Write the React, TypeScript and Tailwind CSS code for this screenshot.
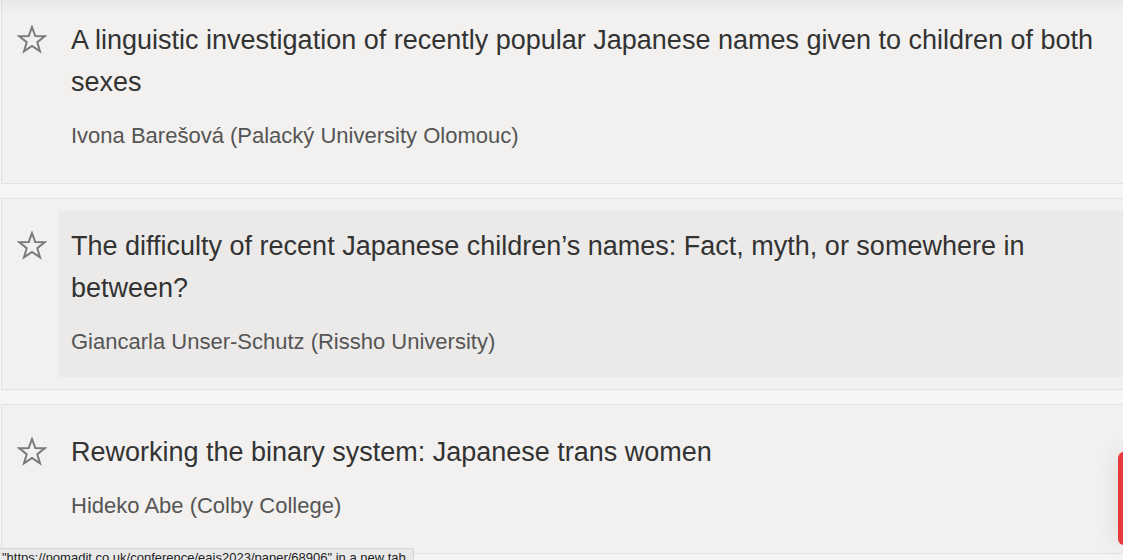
import React from 'react'

interface Paper {
  title: string
  author: string
  hovered?: boolean
}

const papers: Paper[] = [
  {
    title: 'A linguistic investigation of recently popular Japanese names given to children of both sexes',
    author: 'Ivona Barešová (Palacký University Olomouc)',
  },
  {
    title: 'The difficulty of recent Japanese children’s names: Fact, myth, or somewhere in between?',
    author: 'Giancarla Unser-Schutz (Rissho University)',
    hovered: true,
  },
  {
    title: 'Reworking the binary system: Japanese trans women',
    author: 'Hideko Abe (Colby College)',
  },
]

const StarIcon = () => (
  <svg width="30" height="29" viewBox="0 0 30 29" fill="none">
    <polygon
      points="15,2 18.3,11 27.8,11.3 20.3,17.2 23,26.4 15,21 7,26.4 9.7,17.2 2.2,11.3 11.7,11"
      stroke="#7a7a7a"
      strokeWidth="2"
      strokeLinejoin="miter"
    />
  </svg>
)

const PaperCard: React.FC<{ paper: Paper }> = ({ paper }) => (
  <div className="flex border border-[#e2e1df] bg-[#f2f1f0] py-3">
    {/* star column */}
    <div className="w-[56px] shrink-0 pl-[15px] pt-[20px]">
      <StarIcon />
    </div>
    <div className={`flex-1 px-[13px] pt-[14px] pb-[20px] ${paper.hovered ? 'bg-[#ebeae9]' : ''}`}>
      <div className="pr-[15px] text-[27px] leading-[42px] text-[#333]">{paper.title}</div>
      <div className="mt-[18px] text-[22px] leading-[30px] text-[#555]">{paper.author}</div>
    </div>
  </div>
)

export default function App() {
  return (
    <div className="relative h-[560px] w-full overflow-hidden bg-[#f6f5f3] font-['Liberation_Sans',Arial,sans-serif]">
      <div className="-mt-[8px] flex w-[1140px] flex-col gap-[14px] pl-px">
        {papers.map((p) => (
          <PaperCard key={p.title} paper={p} />
        ))}
      </div>

      {/* header shadow */}
      <div className="absolute inset-x-0 top-0 h-3 bg-gradient-to-b from-black/[0.04] to-transparent" />

      {/* feedback tab */}
      <div className="absolute left-[1118px] top-[452px] h-[93px] w-[14px] rounded-l-[6px] bg-[#e8393f] shadow-[0_0_22px_rgba(0,0,0,0.12)]" />

      {/* browser status bubble */}
      <div className="absolute left-0 top-[548px] h-[20px] w-[414px] rounded-tr-[3px] border-t border-r border-[#d4d4d4] bg-[#e9e9e9] pl-[2px] text-[13px] leading-[17px] text-[#222]">
        "https://nomadit.co.uk/conference/eajs2023/paper/68906" in a new tab
      </div>
    </div>
  )
}
